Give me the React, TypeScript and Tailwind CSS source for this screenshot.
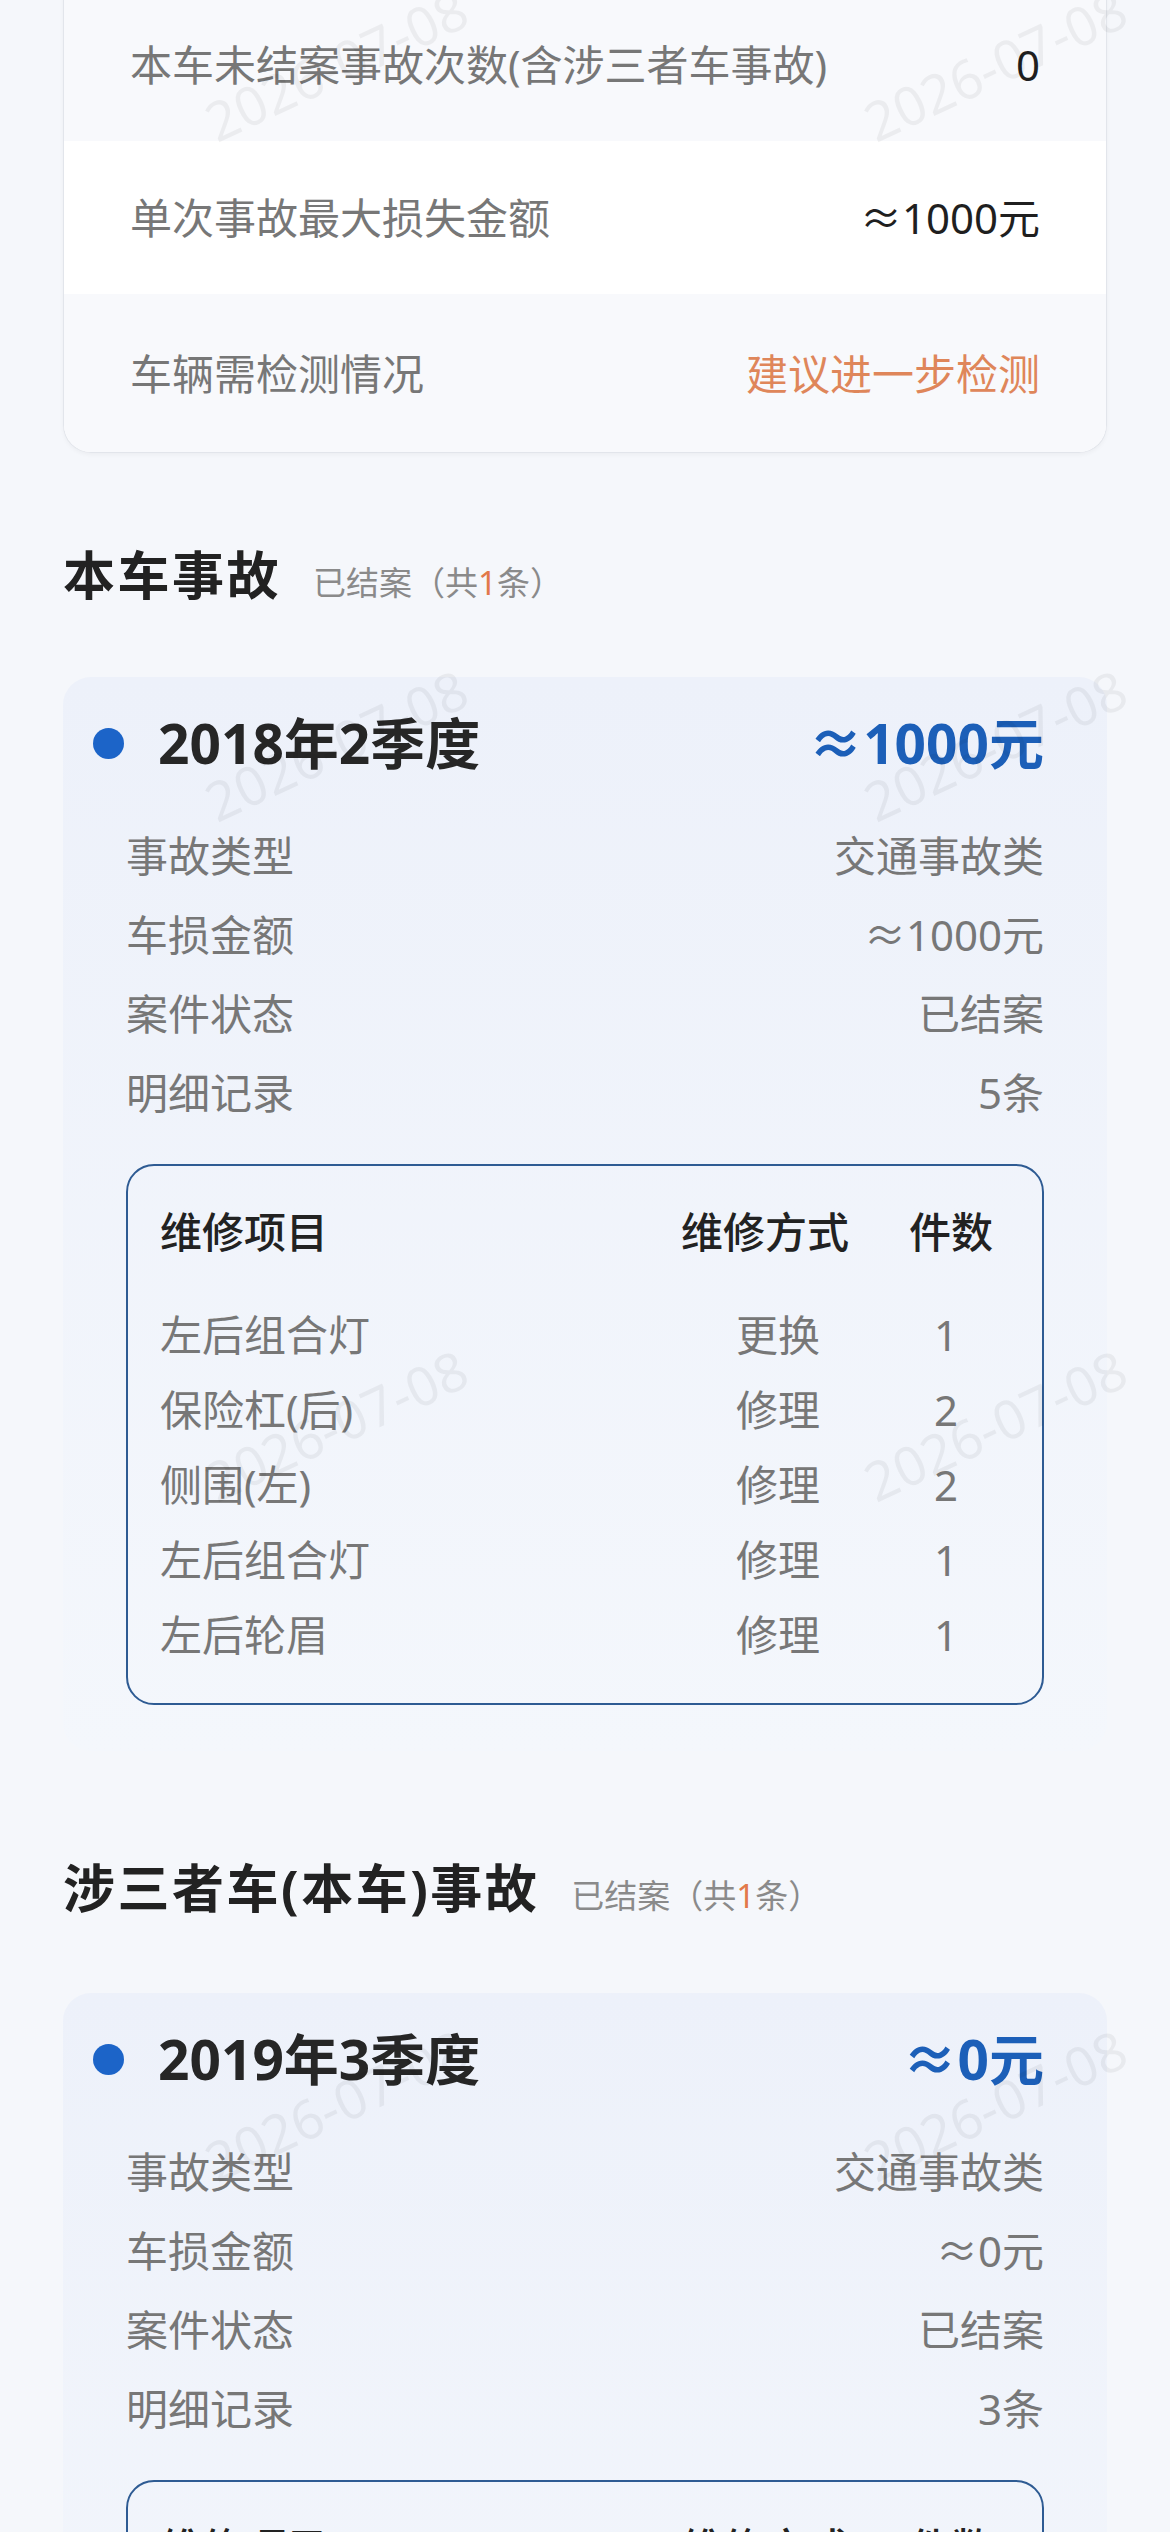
const font = { fontFamily: '"Noto Sans", "Noto Sans CJK SC", sans-serif' }

type Repair = { name: string; way: string; count: number }
type Accident = {
  quarter: string
  amount: string
  type: string
  damage: string
  status: string
  records: string
  repairs: Repair[]
}

const ownAccident: Accident = {
  quarter: "2018年2季度",
  amount: "≈1000元",
  type: "交通事故类",
  damage: "≈1000元",
  status: "已结案",
  records: "5条",
  repairs: [
    { name: "左后组合灯", way: "更换", count: 1 },
    { name: "保险杠(后)", way: "修理", count: 2 },
    { name: "侧围(左)", way: "修理", count: 2 },
    { name: "左后组合灯", way: "修理", count: 1 },
    { name: "左后轮眉", way: "修理", count: 1 },
  ],
}

const thirdAccident: Accident = {
  quarter: "2019年3季度",
  amount: "≈0元",
  type: "交通事故类",
  damage: "≈0元",
  status: "已结案",
  records: "3条",
  repairs: [
    { name: "前保险杠", way: "修理", count: 1 },
    { name: "左前叶子板", way: "修理", count: 1 },
    { name: "左前大灯", way: "更换", count: 1 },
  ],
}

function SectionTitle({ title }: { title: string }) {
  return (
    <div className="flex items-baseline h-[52px]">
      <h3 className="text-[52px] leading-[52px] font-bold text-[#222] tracking-[2.5px]">{title}</h3>
      <span className="ml-[32px] text-[33px] text-[#8a8a8a]">
        已结案（共<span className="text-[#e2794a]">1</span>条）
      </span>
    </div>
  )
}

function AccidentCard({ data }: { data: Accident }) {
  const rows = [
    ["事故类型", data.type],
    ["车损金额", data.damage],
    ["案件状态", data.status],
    ["明细记录", data.records],
  ]
  return (
    <div className="rounded-[28px] bg-gradient-to-b from-[#edf1fa] to-[#f4f7fc] pl-[30px] pr-[63px] pt-[36px] pb-[46px]">
      <div className="flex items-center h-[60px]">
        <span className="w-[31px] h-[31px] rounded-full bg-[#1c64c8]" />
        <span className="ml-[34px] text-[55px] font-bold text-[#262626]">{data.quarter}</span>
        <span className="ml-auto text-[55px] font-bold text-[#1c5fb8]">{data.amount}</span>
      </div>
      <div className="ml-[33px] mt-[43px]">
        {rows.map(([k, v]) => (
          <div key={k} className="flex justify-between items-center h-[79px] text-[42px] text-[#777]">
            <span>{k}</span>
            <span>{v}</span>
          </div>
        ))}
        <div className="mt-[32px] rounded-[28px] border-2 border-[#2e5b93] pl-[32px] pr-[26px] pt-[34px] pb-[31px]">
          <div className="grid grid-cols-[1fr_200px_130px] gap-x-[21px] h-[50px] items-center text-[42px] font-medium text-[#222]">
            <span>维修项目</span>
            <span className="text-center">维修方式</span>
            <span className="text-center">件数</span>
          </div>
          <div className="mt-[47px]">
            {data.repairs.map((r, i) => (
              <div
                key={i}
                className="grid grid-cols-[1fr_200px_130px] gap-x-[21px] h-[75px] items-center text-[42px] text-[#777]"
              >
                <span>{r.name}</span>
                <span className="text-center pl-[26px]">{r.way}</span>
                <span className="text-center pr-[10px]">{r.count}</span>
              </div>
            ))}
          </div>
        </div>
      </div>
    </div>
  )
}

const marks = [65, 745, 1425, 2105]

export default function App() {
  return (
    <div style={font} className="relative h-[2532px] overflow-hidden bg-[#f5f7fb] px-[63px]">
      <div className="-mt-[12px] rounded-b-[28px] border border-t-0 border-[#e2e5eb] bg-white overflow-hidden shadow-[0_2px_4px_rgba(0,0,0,0.04)] text-[42px]">
        <div className="flex items-center justify-between h-[153px] px-[66px] bg-[#f8f9fc]">
          <span className="text-[#777]">本车未结案事故次数(含涉三者车事故)</span>
          <span className="text-[#1f1f1f]">0</span>
        </div>
        <div className="flex items-center justify-between h-[153px] px-[66px] bg-white">
          <span className="text-[#777]">单次事故最大损失金额</span>
          <span className="text-[#1f1f1f]">≈1000元</span>
        </div>
        <div className="flex items-center justify-between h-[158px] px-[66px] bg-[#f8f9fc]">
          <span className="text-[#777]">车辆需检测情况</span>
          <span className="text-[#df865a]">建议进一步检测</span>
        </div>
      </div>

      <div className="mt-[96px]">
        <SectionTitle title="本车事故" />
      </div>
      <div className="mt-[76px]">
        <AccidentCard data={ownAccident} />
      </div>

      <div className="mt-[111px]">
        <SectionTitle title="涉三者车(本车)事故" />
      </div>
      <div className="mt-[79px]">
        <AccidentCard data={thirdAccident} />
      </div>

      {/* watermark */}
      <div className="pointer-events-none absolute inset-0">
        {marks.map((y) => (
          <div key={y}>
            <span
              className="absolute -translate-x-1/2 -translate-y-1/2 -rotate-[25deg] text-[54px] text-black/[0.05] whitespace-nowrap"
              style={{ left: 336, top: y }}
            >
              2026-07-08
            </span>
            <span
              className="absolute -translate-x-1/2 -translate-y-1/2 -rotate-[25deg] text-[54px] text-black/[0.05] whitespace-nowrap"
              style={{ left: 995, top: y }}
            >
              2026-07-08
            </span>
          </div>
        ))}
      </div>
    </div>
  )
}
